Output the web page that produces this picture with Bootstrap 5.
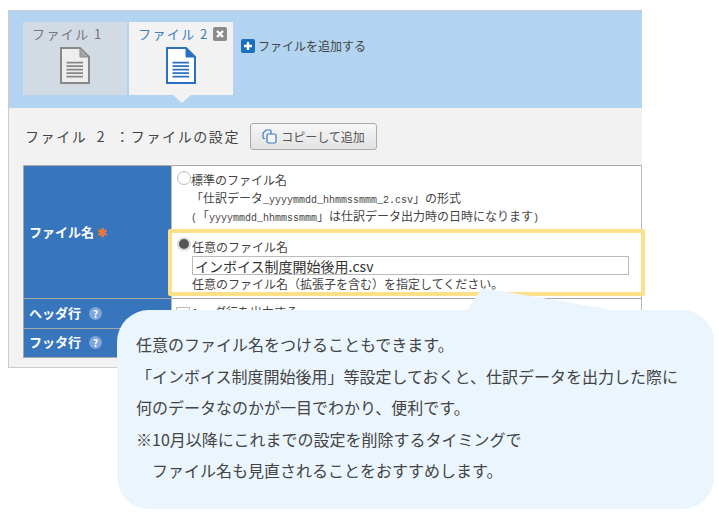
<!DOCTYPE html>
<html lang="ja">
<head>
<meta charset="utf-8">
<title>ファイルの設定</title>
<link href="https://cdn.jsdelivr.net/npm/bootstrap@5.3.0/dist/css/bootstrap.min.css" rel="stylesheet">
<style>
html,body{margin:0;background:#fff;height:517px;overflow:hidden;}
body{font-family:"Noto Sans CJK JP","Liberation Sans",sans-serif;color:#444;font-size:12px;text-spacing-trim:space-all;}
.stage{position:relative;width:719px;height:517px;overflow:hidden;padding:10px 0 0 8px;}
.frame{width:634px;height:358px;border:1px solid #ccc;border-right:0;background:#f2f2f2;}
.band{height:97px;background:#b2d4f0;padding:11px 0 0 14px;}
.ftab{position:relative;width:104px;height:73px;background:#d2dae4;color:#777;}
.ftab-on{background:#f2f2f2;color:#3a7cc8;margin-left:2px;}
.ftab-on::after{content:"";position:absolute;left:44px;top:73px;border:9px solid transparent;border-top:8px solid #f2f2f2;border-bottom:0;}
.ftab-name{font-size:13px;letter-spacing:1.4px;line-height:16px;padding:4px 0 0 9px;white-space:pre;}
.ftab-icon{display:block;margin:5px 0 0 37px;}
.xbtn{position:absolute;left:84px;top:5px;width:14px;height:14px;border-radius:2px;background:#8c8c8c;}
.addlink{margin:17px 0 0 8px;color:#444;line-height:14px;height:14px;}
.fbody{padding:15px 0 0 14px;}
.ftitle{font-size:14px;letter-spacing:1.6px;word-spacing:4.5px;color:#444;white-space:pre;margin:0 10px 0 2px;line-height:27px;}
.copybtn{width:127px;height:27px;padding:0;border:1px solid #aaa;border-radius:3px;background:linear-gradient(#f7f7f7,#e2e2e2);color:#555;font-size:12px;line-height:25px;}
.setbl{width:619px;margin-top:15px;background:#fff;table-layout:fixed;border-collapse:collapse;}
.setbl th,.setbl td{padding:0;border:1px solid #a8a8a8;border-right-color:#bbb;vertical-align:middle;}
.setbl th{width:148px;background:#3776bc;color:#fff;font-size:13px;font-weight:700;padding-left:5px;}
.setbl .r2 th,.setbl .r3 th{padding-bottom:2px;}
.setbl td{color:#444;}
.r1{height:133px;}.r2{height:30px;}.r3{height:29px;}
.setbl td.cell-top{vertical-align:top;}
.setbl td.cell-chk{vertical-align:top;padding-top:4px;line-height:18px;}
.opt{position:relative;padding:5px 0 0 19px;line-height:18px;height:63px;}
.opt-pick{height:67px;margin:0 -3px 0 -4px;padding:5px 0 0 20px;width:477px;border:4px solid #fde08a;border-radius:2px;background:#fff;position:relative;z-index:1;line-height:18px;}
.rad{position:absolute;left:5px;top:5px;width:14px;height:14px;border-radius:50%;border:1px solid #bbb;background:#fff;}
.opt-pick .rad{left:5px;top:4px;background:#555;border:2px solid #ddd;}
.mono{font-family:"Liberation Mono",monospace;font-size:10px;line-height:1;}
.nameinp{display:block;width:437px;height:19px;border:1px solid #bbb;padding:0 2px;font-size:14px;line-height:17px;color:#333;background:#fff;margin:0;font-family:inherit;}
.ind{white-space:pre;height:18px;}
.qmark{display:inline-block;width:13px;height:13px;border-radius:50%;background:#7ea6dd;color:#fff;font-size:10px;font-weight:700;line-height:13px;text-align:center;margin-left:8px;}
.star{color:#e8783a;font-size:12px;margin-left:3px;}
.chk{display:inline-block;width:14px;height:14px;border:1px solid #bbb;background:#fff;margin:0 0 0 4px;vertical-align:middle;}
.bubble{position:absolute;left:117px;top:310px;width:597px;height:199px;background:#eaf5fe;border-radius:32px;padding:19px 0 0 19px;font-size:16px;line-height:31.5px;color:#444;z-index:2;white-space:pre;}
.tail{position:absolute;left:0;top:0;overflow:visible;z-index:2;}
.plus{margin-right:3px;}
</style>
</head>
<body>
<div class="stage">
  <div class="frame">
    <div class="band d-flex align-items-start">
      <div class="ftab">
        <div class="ftab-name">ファイル 1</div>
        <svg class="ftab-icon" width="30" height="37" viewBox="0 0 30 37"><path d="M1 1H20L29 10V36H1Z" fill="#eee" stroke="#888" stroke-width="2"/><path d="M20 1L29 10H20Z" fill="#a6a6a6" stroke="#888" stroke-width="1"/><path d="M6.500 15.600H23M6.500 19.100H23M6.500 22.600H23M6.500 26.100H23M6.500 29.600H23" stroke="#888" stroke-width="1.600"/></svg>
      </div>
      <div class="ftab ftab-on">
        <div class="ftab-name">ファイル 2</div>
        <span class="xbtn"><svg width="14" height="14" viewBox="0 0 14 14" class="d-block"><path d="M4 4L10 10M10 4L4 10" stroke="#fff" stroke-width="2.4"/></svg></span>
        <svg class="ftab-icon" width="30" height="37" viewBox="0 0 30 37"><path d="M1 1H20L29 10V36H1Z" fill="#fff" stroke="#2a6fc0" stroke-width="2"/><path d="M20 1L29 10H20Z" fill="#2a6fc0" stroke="#2a6fc0" stroke-width="1"/><path d="M6.500 15.600H23M6.500 19.100H23M6.500 22.600H23M6.500 26.100H23M6.500 29.600H23" stroke="#2a6fc0" stroke-width="1.600"/></svg>
      </div>
      <div class="addlink d-flex align-items-center">
        <svg class="plus" width="14" height="14" viewBox="0 0 14 14"><rect width="14" height="14" rx="2" fill="#1a6fc0"/><path d="M7 3V11M3 7H11" stroke="#fff" stroke-width="2.4"/></svg>
        <span>ファイルを追加する</span>
      </div>
    </div>
    <div class="fbody">
      <div class="d-flex align-items-center">
        <div class="ftitle">ファイル 2 ：ファイルの設定</div>
        <button type="button" class="copybtn d-flex align-items-center justify-content-center gap-1">
          <svg width="15" height="15" viewBox="0 0 15 15"><rect x="5" y="5" width="9" height="9" rx="1.5" fill="#f4f4f4" stroke="#3a78c2" stroke-width="1.2"/><path d="M3 9.500H2A1 1 0 0 1 1 8.500V4L4 1H8A1 1 0 0 1 9 2V5" fill="none" stroke="#3a78c2" stroke-width="1.2"/></svg>
          <span>コピーして追加</span>
        </button>
      </div>
      <table class="setbl">
        <tr class="r1">
          <th>ファイル名<span class="star">✱</span></th>
          <td class="cell-top">
            <div class="opt"><span class="rad"></span>標準のファイル名
<div class="ind">「仕訳データ<span class="mono">_yyyymmdd_hhmmssmmm_2.csv</span>」の形式</div><div class="ind"><span class="mono">(</span>「<span class="mono">yyyymmdd_hhmmssmmm</span>」は仕訳データ出力時の日時になります<span class="mono">)</span></div></div>
            <div class="opt-pick"><span class="rad"></span>任意のファイル名
              <input class="nameinp" type="text" value="インボイス制度開始後用.csv" aria-label="任意のファイル名">
              <div>任意のファイル名（拡張子を含む）を指定してください。</div>
            </div>
          </td>
        </tr>
        <tr class="r2">
          <th>ヘッダ行<span class="qmark">?</span></th>
          <td class="cell-chk"><span class="chk"></span><span>ヘッダ行を出力する</span></td>
        </tr>
        <tr class="r3">
          <th>フッタ行<span class="qmark">?</span></th>
          <td><span class="chk"></span></td>
        </tr>
      </table>
    </div>
  </div>
  <svg class="tail" width="719" height="517" viewBox="0 0 719 517"><polygon points="466,312 482,288 625,312" fill="#eaf5fe"/></svg>
  <div class="bubble">任意のファイル名をつけることもできます。
「インボイス制度開始後用」等設定しておくと、仕訳データを出力した際に
何のデータなのかが一目でわかり、便利です。
※10月以降にこれまでの設定を削除するタイミングで
　ファイル名も見直されることをおすすめします。</div>
</div>
</body>
</html>
